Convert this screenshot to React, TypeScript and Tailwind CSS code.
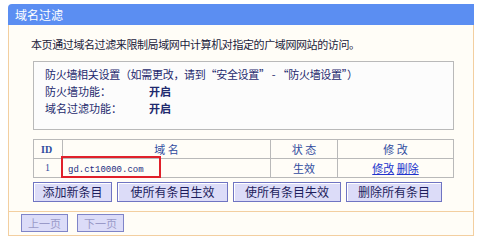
import React from "react";

const font = { fontFamily: '"SimSun","Noto Sans CJK SC","Liberation Sans",sans-serif' };

function Btn({ children, w }: { children: React.ReactNode; w: string }) {
  return (
    <div
      className={`${w} h-[20px] flex items-center justify-center bg-[#dcdcf8] border border-[#6f74c2] text-[12px] text-[#1c1c5c] shadow-[inset_1px_1px_0_#ffffff]`}
    >
      {children}
    </div>
  );
}

export default function App() {
  return (
    <div className="w-[480px] h-[241px] bg-white pt-[4px] pl-[8px]" style={font}>
      <div className="w-[466px] flex flex-col">
        <div className="h-[21px] bg-[#5b8ef2] rounded-tl-[4px] text-white text-[12px] leading-[21px] pl-[7px]">
          域名过滤
        </div>
        <div className="border-x border-b border-[#f3cfa0] bg-[#fffdf7]">
          <div className="h-[186px] pt-[10px] pl-[22px] flex flex-col">
            <div className="text-[11px] leading-[18px] text-[#1a1a3a] tracking-[-0.4px]">
              本页通过域名过滤来限制局域网中计算机对指定的广域网网站的访问。
            </div>
            <div className="mt-[8px] ml-[2px] w-[421px] h-[69px] border border-[#b9b9b9] bg-[#fcfcfc] pt-[4px] pl-[11px] text-[11px] leading-[17px] text-[#1e2a6e]">
              <div className="tracking-[-0.3px]">防火墙相关设置（如需更改，请到“安全设置” - “防火墙设置”）</div>
              <div className="flex">
                <span className="w-[104px]">防火墙功能：</span>
                <span className="font-bold">开启</span>
              </div>
              <div className="flex">
                <span className="w-[104px]">域名过滤功能：</span>
                <span className="font-bold">开启</span>
              </div>
            </div>
            <div className="mt-[9px] ml-[2px] w-[421px] border border-[#b9b9b9] text-[11px] text-[#2f4b9e]">
              <div className="flex h-[19px] border-b border-[#b9b9b9] items-center">
                <div className="w-[29px] h-full border-r border-[#b9b9b9] pl-[7px] leading-[19px] font-bold text-[10px]" style={{ fontFamily: '"Liberation Serif",serif' }}>ID</div>
                <div className="w-[208px] h-full border-r border-[#b9b9b9] text-center leading-[19px]">域 名</div>
                <div className="w-[67px] h-full border-r border-[#b9b9b9] text-center leading-[19px]">状 态</div>
                <div className="flex-1 h-full text-center leading-[19px]">修 改</div>
              </div>
              <div className="flex h-[18px] items-center">
                <div className="w-[29px] h-full border-r border-[#b9b9b9] pl-[11px] leading-[18px] text-[10px]" style={{ fontFamily: '"Liberation Serif",serif' }}>1</div>
                <div className="w-[208px] h-full border-r border-[#b9b9b9] relative">
                  <div className="absolute left-[-2px] top-[-3px] w-[100px] h-[22px] border-2 border-[#e0202a]" />
                  <span className="pl-[5px] leading-[18px] text-[9px] text-[#1b2c80]" style={{ fontFamily: '"Liberation Mono",monospace' }}>gd.ct10000.com</span>
                </div>
                <div className="w-[67px] h-full border-r border-[#b9b9b9] text-center leading-[18px]">生效</div>
                <div className="flex-1 h-full text-center leading-[18px]">
                  <span className="underline text-[#2233cc]">修改</span>{" "}
                  <span className="underline text-[#2233cc]">删除</span>
                </div>
              </div>
            </div>
            <div className="mt-[4px] ml-[2px] flex gap-[5px]">
              <Btn w="w-[79px]">添加新条目</Btn>
              <Btn w="w-[111px]">使所有条目生效</Btn>
              <Btn w="w-[108px]">使所有条目失效</Btn>
              <Btn w="w-[96px]">删除所有条目</Btn>
            </div>
          </div>
          <div className="border-t border-[#f3cfa0] h-[24px] pl-[12px] pt-[2px] flex gap-[9px]">
            <div className="w-[47px] h-[18px] bg-[#dcdcf8] border border-[#7f84c8] text-[11px] text-[#9a9ac8] flex items-center justify-center">上一页</div>
            <div className="w-[47px] h-[18px] bg-[#dcdcf8] border border-[#7f84c8] text-[11px] text-[#9a9ac8] flex items-center justify-center">下一页</div>
          </div>
        </div>
      </div>
    </div>
  );
}
